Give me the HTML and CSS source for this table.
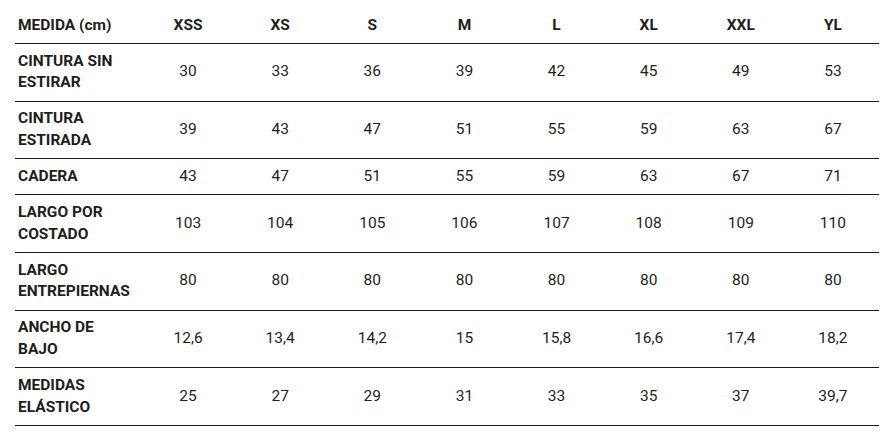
FILE: index.html
```html
<!DOCTYPE html>
<html lang="es">
<head>
<meta charset="utf-8">
<title>Tabla de medidas</title>
<link rel="stylesheet" href="styles.css">
</head>
<body>
<div class="wrap">
<table class="sizes">
  <colgroup>
    <col class="c-label">
    <col><col><col><col><col><col><col><col>
  </colgroup>
  <thead>
    <tr>
      <th class="label">MEDIDA (cm)</th>
      <th>XSS</th><th>XS</th><th>S</th><th>M</th><th>L</th><th>XL</th><th>XXL</th><th>YL</th>
    </tr>
  </thead>
  <tbody>
    <tr>
      <th class="label">CINTURA SIN ESTIRAR</th>
      <td>30</td><td>33</td><td>36</td><td>39</td><td>42</td><td>45</td><td>49</td><td>53</td>
    </tr>
    <tr>
      <th class="label">CINTURA ESTIRADA</th>
      <td>39</td><td>43</td><td>47</td><td>51</td><td>55</td><td>59</td><td>63</td><td>67</td>
    </tr>
    <tr>
      <th class="label">CADERA</th>
      <td>43</td><td>47</td><td>51</td><td>55</td><td>59</td><td>63</td><td>67</td><td>71</td>
    </tr>
    <tr>
      <th class="label">LARGO POR COSTADO</th>
      <td>103</td><td>104</td><td>105</td><td>106</td><td>107</td><td>108</td><td>109</td><td>110</td>
    </tr>
    <tr>
      <th class="label">LARGO ENTREPIERNAS</th>
      <td>80</td><td>80</td><td>80</td><td>80</td><td>80</td><td>80</td><td>80</td><td>80</td>
    </tr>
    <tr>
      <th class="label">ANCHO DE BAJO</th>
      <td>12,6</td><td>13,4</td><td>14,2</td><td>15</td><td>15,8</td><td>16,6</td><td>17,4</td><td>18,2</td>
    </tr>
    <tr>
      <th class="label">MEDIDAS ELÁSTICO</th>
      <td>25</td><td>27</td><td>29</td><td>31</td><td>33</td><td>35</td><td>37</td><td>39,7</td>
    </tr>
  </tbody>
</table>
</div>
</body>
</html>
```
FILE: styles.css
```css
html, body {
  margin: 0;
  padding: 0;
  background: #ffffff;
}

body {
  font-family: Roboto, "Liberation Sans", Arial, sans-serif;
  font-size: 15.5px;
  color: #1e1e1e;
}

.wrap {
  padding: 8px 8px 0 15px;
}

.sizes {
  width: 864px;
  border-collapse: collapse;
  table-layout: fixed;
}

.c-label {
  width: 127px;
}

.sizes th,
.sizes td {
  padding: 6.67px 0;
  line-height: 21.67px;
  text-align: center;
  vertical-align: middle;
  border-bottom: 1px solid #1c1c1c;
}

.sizes th {
  font-weight: 700;
}

.sizes td {
  font-weight: 400;
}

.sizes .label {
  text-align: left;
  padding-left: 3px;
  padding-right: 9px;
}
```
